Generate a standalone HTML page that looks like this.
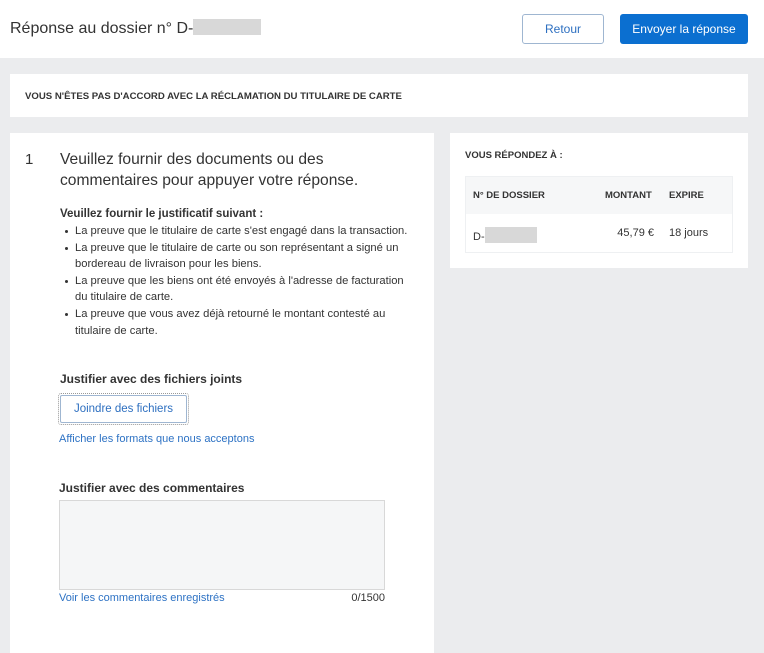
<!DOCTYPE html>
<html><head><meta charset="utf-8"><style>
*{margin:0;padding:0;box-sizing:border-box}
body{width:764px;height:640px;overflow:hidden;background:#ebecee;font-family:"Liberation Sans",Arial,sans-serif;color:#333;position:relative}
.a{position:absolute;white-space:nowrap}
.hdr{position:absolute;left:0;top:0;width:764px;height:58px;background:#fff}
.btn{position:absolute;top:14px;height:30px;border-radius:3px;font-size:12px;display:flex;align-items:center;justify-content:center}
.panel{position:absolute;background:#fff}
.blue{color:#2d72c4}
ul{list-style:none}
li{position:relative;padding-left:15px;font-size:11.2px;line-height:16.6px;color:#333}
li:before{content:"";position:absolute;left:5px;top:7px;width:3px;height:3px;border-radius:50%;background:#333}
.gray{background:#d8d8d8;display:inline-block}
</style></head><body>
<div class="hdr">
 <div class="a" style="left:10px;top:19px;font-size:16px;color:#333">Réponse au dossier n° D-<span class="gray" style="width:68px;height:16px;vertical-align:-2px"></span></div>
 <div class="btn" style="left:522px;width:82px;border:1px solid #9fb6d1;color:#2d6fc0">Retour</div>
 <div class="btn" style="left:620px;width:128px;background:#0b6fd0;color:#fff">Envoyer la réponse</div>
</div>
<div class="panel" style="left:10px;top:74px;width:738px;height:43px">
 <div class="a" style="left:15px;top:17px;font-size:9.6px;font-weight:bold;color:#333">VOUS N'ÊTES PAS D'ACCORD AVEC LA RÉCLAMATION DU TITULAIRE DE CARTE</div>
</div>
<div class="panel" style="left:10px;top:133px;width:424px;height:520px">
 <div class="a" style="left:15px;top:18px;font-size:15px">1</div>
 <div class="a" style="left:50px;top:16px;font-size:15.6px;line-height:21px">Veuillez fournir des documents ou des<br>commentaires pour appuyer votre réponse.</div>
 <div class="a" style="left:50px;top:75px;font-size:11.5px;font-weight:bold">Veuillez fournir le justificatif suivant :</div>
 <ul class="a" style="left:50px;top:90px">
  <li>La preuve que le titulaire de carte s'est engagé dans la transaction.</li>
  <li>La preuve que le titulaire de carte ou son représentant a signé un<br>bordereau de livraison pour les biens.</li>
  <li>La preuve que les biens ont été envoyés à l'adresse de facturation<br>du titulaire de carte.</li>
  <li>La preuve que vous avez déjà retourné le montant contesté au<br>titulaire de carte.</li>
 </ul>
 <div class="a" style="left:50px;top:239px;font-size:12px;font-weight:bold">Justifier avec des fichiers joints</div>
 <div class="a" style="left:48px;top:260px;width:131px;height:32px;border:1px dotted #999;border-radius:3px;padding:1px"><div style="width:100%;height:100%;border:1px solid #9fb6d1;border-radius:2px;font-size:11.5px;color:#2d6fc0;display:flex;align-items:center;justify-content:center">Joindre des fichiers</div></div>
 <div class="a blue" style="left:49px;top:300px;font-size:11px">Afficher les formats que nous acceptons</div>
 <div class="a" style="left:49px;top:348px;font-size:12px;font-weight:bold">Justifier avec des commentaires</div>
 <div class="a" style="left:49px;top:367px;width:326px;height:90px;background:#f5f6f7;border:1px solid #d8d8d8"></div>
 <div class="a blue" style="left:49px;top:459px;font-size:11px">Voir les commentaires enregistrés</div>
 <div class="a" style="left:275px;width:100px;text-align:right;top:459px;font-size:11px">0/1500</div>
</div>
<div class="panel" style="left:450px;top:133px;width:298px;height:135px">
 <div class="a" style="left:15px;top:17px;font-size:9.5px;font-weight:bold">VOUS RÉPONDEZ À :</div>
 <div class="a" style="left:15px;top:43px;width:268px;height:77px;border:1px solid #eef0f2">
  <div style="height:37px;background:#f6f7f8"></div>
  <div class="a" style="left:7px;top:13px;font-size:9.5px;font-weight:bold">N° DE DOSSIER</div>
  <div class="a" style="left:139px;top:13px;font-size:9.5px;font-weight:bold">MONTANT</div>
  <div class="a" style="left:203px;top:13px;font-size:9.5px;font-weight:bold">EXPIRE</div>
  <div class="a" style="left:7px;top:50px;font-size:11px">D-<span class="gray" style="width:52px;height:16px;vertical-align:-3px"></span></div>
  <div class="a" style="left:100px;width:88px;text-align:right;top:50px;font-size:11px">45,79 €</div>
  <div class="a" style="left:203px;top:50px;font-size:11px">18 jours</div>
 </div>
</div>
</body></html>
